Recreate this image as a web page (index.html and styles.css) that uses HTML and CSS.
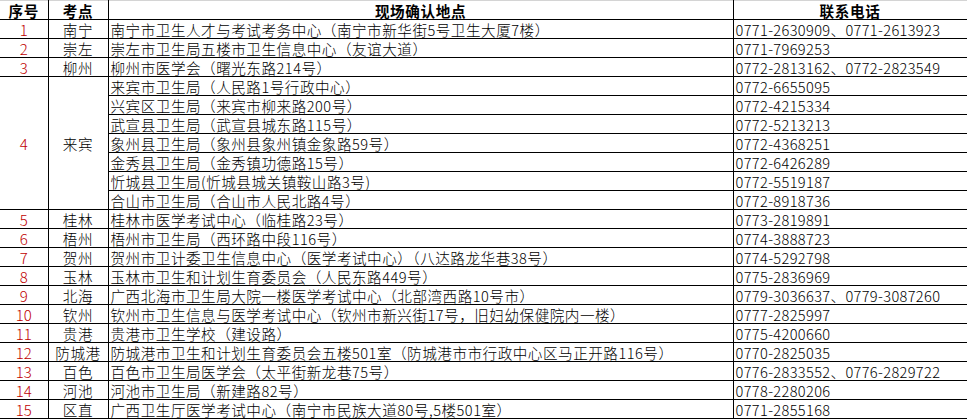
FILE: index.html
```html
<!DOCTYPE html>
<html lang="zh-CN">
<head>
<meta charset="utf-8">
<title>现场确认地点</title>
<link rel="stylesheet" href="styles.css">
</head>
<body>
<table class="sheet">
  <colgroup>
    <col class="c-no">
    <col class="c-site">
    <col class="c-addr">
    <col class="c-tel">
  </colgroup>
  <thead>
    <tr>
      <th>序号</th>
      <th>考点</th>
      <th>现场确认地点</th>
      <th>联系电话</th>
    </tr>
  </thead>
  <tbody>
    <tr><td class="no">1</td><td class="site">南宁</td><td class="addr">南宁市卫生人才与考试考务中心（南宁市新华街5号卫生大厦7楼）</td><td class="tel">0771-2630909、0771-2613923</td></tr>
    <tr><td class="no">2</td><td class="site">崇左</td><td class="addr">崇左市卫生局五楼市卫生信息中心（友谊大道）</td><td class="tel">0771-7969253</td></tr>
    <tr><td class="no">3</td><td class="site">柳州</td><td class="addr">柳州市医学会（曙光东路214号）</td><td class="tel">0772-2813162、0772-2823549</td></tr>
    <tr><td class="no" rowspan="7">4</td><td class="site" rowspan="7">来宾</td><td class="addr">来宾市卫生局（人民路1号行政中心）</td><td class="tel">0772-6655095</td></tr>
    <tr><td class="addr">兴宾区卫生局（来宾市柳来路200号）</td><td class="tel">0772-4215334</td></tr>
    <tr><td class="addr">武宣县卫生局（武宣县城东路115号）</td><td class="tel">0772-5213213</td></tr>
    <tr><td class="addr">象州县卫生局（象州县象州镇金象路59号）</td><td class="tel">0772-4368251</td></tr>
    <tr><td class="addr">金秀县卫生局（金秀镇功德路15号）</td><td class="tel">0772-6426289</td></tr>
    <tr><td class="addr">忻城县卫生局(忻城县城关镇鞍山路3号)</td><td class="tel">0772-5519187</td></tr>
    <tr><td class="addr">合山市卫生局（合山市人民北路4号）</td><td class="tel">0772-8918736</td></tr>
    <tr><td class="no">5</td><td class="site">桂林</td><td class="addr">桂林市医学考试中心（临桂路23号）</td><td class="tel">0773-2819891</td></tr>
    <tr><td class="no">6</td><td class="site">梧州</td><td class="addr">梧州市卫生局（西环路中段116号）</td><td class="tel">0774-3888723</td></tr>
    <tr><td class="no">7</td><td class="site">贺州</td><td class="addr">贺州市卫计委卫生信息中心（医学考试中心）（八达路龙华巷38号）</td><td class="tel">0774-5292798</td></tr>
    <tr><td class="no">8</td><td class="site">玉林</td><td class="addr">玉林市卫生和计划生育委员会（人民东路449号）</td><td class="tel">0775-2836969</td></tr>
    <tr><td class="no">9</td><td class="site">北海</td><td class="addr">广西北海市卫生局大院一楼医学考试中心（北部湾西路10号市）</td><td class="tel">0779-3036637、0779-3087260</td></tr>
    <tr><td class="no">10</td><td class="site">钦州</td><td class="addr">钦州市卫生信息与医学考试中心（钦州市新兴街17号，旧妇幼保健院内一楼）</td><td class="tel">0777-2825997</td></tr>
    <tr><td class="no">11</td><td class="site">贵港</td><td class="addr">贵港市卫生学校（建设路）</td><td class="tel">0775-4200660</td></tr>
    <tr><td class="no">12</td><td class="site">防城港</td><td class="addr">防城港市卫生和计划生育委员会五楼501室（防城港市市行政中心区马正开路116号）</td><td class="tel">0770-2825035</td></tr>
    <tr><td class="no">13</td><td class="site">百色</td><td class="addr">百色市卫生局医学会（太平街新龙巷75号）</td><td class="tel">0776-2833552、0776-2829722</td></tr>
    <tr><td class="no">14</td><td class="site">河池</td><td class="addr">河池市卫生局（新建路82号）</td><td class="tel">0778-2280206</td></tr>
    <tr><td class="no">15</td><td class="site">区直</td><td class="addr">广西卫生厅医学考试中心（南宁市民族大道80号,5楼501室）</td><td class="tel">0771-2855168</td></tr>
  </tbody>
</table>
</body>
</html>
```
FILE: styles.css
```css
html, body {
  margin: 0;
  padding: 0;
  background: #ffffff;
}

body {
  font-family: "Noto Sans CJK SC", "Noto Sans", sans-serif;
  font-size: 14.6px;
  font-weight: 300;
  color: #000000;
}

.sheet {
  border-collapse: collapse;
  table-layout: fixed;
  width: 967px;
}

.c-no { width: 48px; }
.c-site { width: 60px; }
.c-addr { width: 625px; }
.c-tel { width: 234px; }

.sheet th,
.sheet td {
  border: 1px solid #000000;
  height: 18px;
  padding: 0;
  line-height: 17px;
  white-space: nowrap;
  overflow: hidden;
  vertical-align: middle;
}

.sheet th {
  font-weight: bold;
  text-align: center;
  letter-spacing: 0.6px;
  border-top: 1px solid #d4d4d4;
}

.sheet th:first-child,
.sheet td.no {
  border-left: none;
}

.no {
  text-align: center;
  color: #c00000;
  font-size: 15px;
}

.site {
  text-align: center;
  letter-spacing: 0.6px;
}

.addr,
.tel {
  text-align: left;
  padding-left: 2px !important;
}

.addr {
  letter-spacing: 0.5px;
}

.tel {
  letter-spacing: 0.35px;
}
```
